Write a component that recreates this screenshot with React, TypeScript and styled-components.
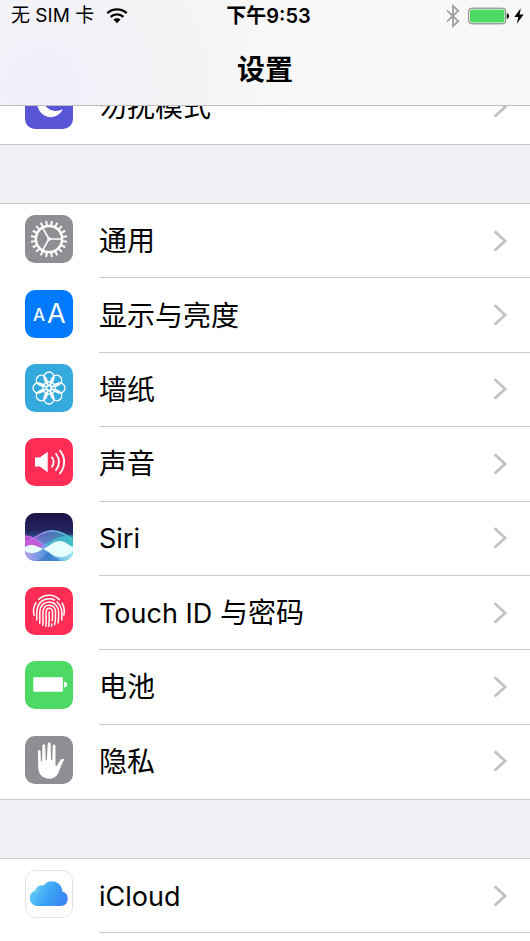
import React from "react";
import styled, { createGlobalStyle } from "styled-components";

const GlobalStyle = createGlobalStyle`
  * { box-sizing: border-box; }
  body {
    margin: 0;
    background: #efeff4;
    color: #000;
    font-family: Inter, "Noto Sans CJK SC", sans-serif;
  }
`;

const Screen = styled.div`
  display: flex;
  flex-direction: column;
  height: 100vh;
  overflow: hidden;
`;

const Header = styled.header`
  position: relative;
  z-index: 1;
  flex: none;
  background: radial-gradient(circle at 8% 85%, #efeff9 0%, #f3f3f6 24%, #f8f8f8 50%);
  border-bottom: 1px solid #bdbcc1;
`;

const StatusBar = styled.div`
  display: grid;
  grid-template-columns: 1fr auto 1fr;
  align-items: center;
  height: 32px;
  padding: 0 4px 0 11px;
  font-size: 19px;
  line-height: 32px;
`;

const StatusSide = styled.div<{ $end?: boolean }>`
  display: flex;
  align-items: center;
  gap: ${(p) => (p.$end ? 8 : 12)}px;
  justify-content: ${(p) => (p.$end ? "flex-end" : "flex-start")};
`;

const Power = styled.div`
  display: flex;
  align-items: center;
  gap: 4px;
`;

const Time = styled.time`
  font-size: 20px;
  font-weight: 600;
`;

const Title = styled.h1`
  margin: 0;
  padding-top: 3px;
  height: 73px;
  font-size: 28px;
  font-weight: 600;
  line-height: 70px;
  text-align: center;
`;

const Content = styled.main`
  display: flex;
  flex: 1;
  flex-direction: column;
  gap: 58px;
  min-height: 0;
  margin-top: -37px;
`;

const Group = styled.ul<{ $minHeight: number; $grow?: boolean }>`
  display: grid;
  flex: ${(p) => (p.$grow ? "1 0 auto" : "none")};
  grid-auto-rows: ${(p) => (p.$grow ? "74px" : "1fr")};
  min-height: ${(p) => p.$minHeight}px;
  margin: 0;
  padding: 0;
  border: solid #c8c7cc;
  border-width: ${(p) => (p.$grow ? "1px 0 0" : "1px 0")};
  background: #fff;
  list-style: none;
`;

const Row = styled.li<{ $divider: boolean }>`
  display: flex;
  background: linear-gradient(#c8c7cc, #c8c7cc) 99px 100% / ${(p) => (p.$divider ? "100% 1px" : "0 0")} no-repeat;
`;

const RowLink = styled.a`
  display: flex;
  flex: 1;
  align-items: center;
  padding: 0 22px 0 25px;
  color: inherit;
  text-decoration: none;
`;

const AppIcon = styled.svg`
  flex: none;
  width: 48px;
  height: 48px;
  margin: 0 26px 4px 0;
  border-radius: 10px;
`;

const Label = styled.span`
  flex: 1;
  font-size: 28px;
  line-height: 40px;
`;

const Latin = styled.span`
  font-size: 27px;
`;

const Glyph = styled.svg`
  display: block;
  flex: none;
`;

function WifiIcon() {
  return (
    <Glyph width="22" height="16" viewBox="0 0 22 16" fill="none" stroke="#000" strokeWidth="2.3">
      <path d="M1.3 5.2C6.8.2 15.2.2 20.7 5.2M4.6 8.8c3.7-3.2 9.1-3.2 12.8 0" />
      <path d="M7.4 11.5c2-1.8 5.2-1.8 7.2 0L11 15.2z" fill="#000" stroke="none" />
    </Glyph>
  );
}

function BluetoothIcon() {
  return (
    <Glyph width="14" height="24" viewBox="0 0 14 24" fill="none" stroke="#9b9b9b" strokeWidth="1.7">
      <path d="M1 6.5 12.3 17.2 7 22V2l5.3 4.8L1 17.5" />
    </Glyph>
  );
}

function BatteryStatusIcon() {
  return (
    <Glyph width="42" height="18" viewBox="0 0 42 18">
      <rect x=".7" y="1.2" width="37" height="15.6" rx="3" fill="#fff" stroke="#777" />
      <rect x="2" y="2.4" width="34.5" height="13.2" rx="1.8" fill="#4cd964" />
      <path d="M38.8 6.2c3 .6 3 5 0 5.6z" />
    </Glyph>
  );
}

function BoltIcon() {
  return (
    <Glyph width="12" height="16" viewBox="0 0 12 16">
      <path d="M6.8.3.3 9h4l-1.5 6.7L9.7 6.4H5.6z" />
    </Glyph>
  );
}

function Chevron() {
  return (
    <Glyph width="15" height="23" viewBox="0 0 15 23" fill="none" stroke="#c2c2c6" strokeWidth="2.7">
      <path d="m1.6 1.2 10.6 9.7L1.6 20.6" />
    </Glyph>
  );
}

function MoonIcon() {
  return (
    <AppIcon viewBox="0 0 48 48">
      <rect width="48" height="48" fill="#5856d6" />
      <path d="M19 11.5A13.2 13.2 0 1 0 37.8 28A13 13 0 0 1 19 11.5z" fill="#fff" />
    </AppIcon>
  );
}

function GearIcon() {
  const teeth = Array.from({ length: 20 }, (_, i) => i * 18);
  return (
    <AppIcon viewBox="0 0 48 48">
      <rect width="48" height="48" fill="#8e8e93" />
      <g stroke="#fff" fill="none">
        <circle cx="24" cy="24" r="13.1" strokeWidth="2.5" />
        {teeth.map((a) => (
          <path key={a} d="M24 5.8v4.6" strokeWidth="2" transform={`rotate(${a + 9} 24 24)`} />
        ))}
        <path d="M24 24h13M24 24l-6.5-11.3M24 24l-6.5 11.3" strokeWidth="1.6" />
      </g>
      <circle cx="24" cy="24" r="1.8" fill="#fff" />
    </AppIcon>
  );
}

const IconText = styled.text`
  fill: #fff;
  font-family: Inter, sans-serif;
`;

function DisplayIcon() {
  return (
    <AppIcon viewBox="0 0 48 48">
      <rect width="48" height="48" fill="#007aff" />
      <IconText x="8" y="31" fontSize="17" fontWeight="500">A</IconText>
      <IconText x="22" y="33" fontSize="27">A</IconText>
    </AppIcon>
  );
}

function FlowerIcon() {
  const petals = Array.from({ length: 8 }, (_, i) => i * 45);
  return (
    <AppIcon viewBox="0 0 48 48">
      <rect width="48" height="48" fill="#34aadc" />
      <g fill="none" stroke="#fff" strokeWidth="1.3">
        {petals.map((a) => (
          <g key={a} transform={`rotate(${a} 24 24)`}>
            <circle cx="24" cy="13" r="5" />
            <path d="M24 21.6c-2.8-1.8-4.4-4.4-4.8-7.4M24 21.6c2.8-1.8 4.4-4.4 4.8-7.4" />
          </g>
        ))}
        <circle cx="24" cy="24" r="2.3" />
      </g>
    </AppIcon>
  );
}

function SoundIcon() {
  return (
    <AppIcon viewBox="0 0 48 48">
      <rect width="48" height="48" fill="#ff2d55" />
      <path d="M10 19.5h4.8l7.9-5.8v20.6l-7.9-5.8H10z" fill="#fff" />
      <g fill="none" stroke="#fff" strokeWidth="1.9" strokeLinecap="round">
        <path d="M27 19.4c2.2 2.6 2.2 6.6 0 9.2M31 16c4 4.8 4 11.2 0 16M35 12.7c5.5 6.8 5.5 15.8 0 22.6" />
      </g>
    </AppIcon>
  );
}

function SiriIcon() {
  return (
    <AppIcon viewBox="0 0 48 48">
      <defs>
        <linearGradient id="siriSky" x1="0" y1="0" x2="0" y2="1">
          <stop offset="0" stopColor="#1d1247" />
          <stop offset=".36" stopColor="#24245f" />
          <stop offset=".65" stopColor="#356da8" />
          <stop offset="1" stopColor="#4698d0" />
        </linearGradient>
        <linearGradient id="siriWave" x1="0" y1="0" x2="1" y2="0">
          <stop offset="0" stopColor="#df55e3" />
          <stop offset=".4" stopColor="#8296f0" />
          <stop offset="1" stopColor="#39d4cb" />
        </linearGradient>
        <linearGradient id="siriBase" x1="0" y1="0" x2="1" y2="0">
          <stop offset="0" stopColor="#b7a6ee" />
          <stop offset=".5" stopColor="#4190da" />
          <stop offset="1" stopColor="#a9eef2" />
        </linearGradient>
      </defs>
      <rect width="48" height="48" fill="url(#siriSky)" />
      <path d="M0 30c9-3 14-12 26-13 9 0 15 3 22 10v21H0z" fill="url(#siriWave)" opacity=".55" />
      <path d="M0 23c9 0 16 6 22 12H0z" fill="#d957dc" opacity=".75" />
      <path d="M14 35c8-4 17-13 34-13v14z" fill="#46dfda" opacity=".5" />
      <path d="M0 29c11-3 14-10 26-11 9 0 15 3 22 9M0 23c9 0 16 6 22 12" fill="none" stroke="url(#siriWave)" strokeWidth="1.4" />
      <path d="M0 37c10 5 14-3 20-1s16 10 28 1v11H0z" fill="url(#siriBase)" />
      <path d="M11 48c5-1 8-5 12-9 5 5 10 7 14 9z" fill="#3c7ac8" opacity=".65" />
      <path d="M0 34c7-4 11-1 18 2-7 4-11 6-18 2zM18 36c7-3 10-8 17-8 5 0 8 4 13 6v4c-6 5-9 7-14 6-6 0-9-5-16-8z" fill="#e7ffff" />
    </AppIcon>
  );
}

function FingerprintIcon() {
  return (
    <AppIcon viewBox="0 0 48 48">
      <rect width="48" height="48" fill="#ff2d55" />
      <g fill="none" stroke="#fff" strokeWidth="1.5" strokeLinecap="round">
        <path d="M13.7 12.4C19.6 6.6 29 6.8 34.5 12.7" />
        <path d="M9.2 28.4c-1.3-4.6-.6-9.2 1.8-12.8M37.2 16.1c2 3.7 2.6 7.6 1.6 12" />
        <path d="M11.7 33c.5-3.3-.2-6.5.2-9.5.8-7.2 5.8-11.8 12.1-11.8 2 0 3.8.4 5.4 1.3M32 15c5.1 4.2 5.2 9.7 4.8 18" />
        <path d="M14.7 36.2c.6-4-.2-8.3.2-12.4C15.5 18.5 19.2 15 24 15c5.8 0 9.5 4.3 9.7 10.2.1 3.8-.1 7.3-.7 10.9" />
        <path d="M17.8 38.3c.7-4.7-.2-9.4.2-13.9.4-3.8 2.7-6.2 6-6.2 4 0 6.4 2.7 6.6 7 .1 4.2-.1 8.1-1 12.6" />
        <path d="M20.9 39.4c.7-5-.1-10 .2-14.5.2-2.3 1.3-3.6 2.9-3.6 2.1 0 3.4 1.5 3.5 4.1.2 3.3-.1 5.8-.3 8.4M26.8 37l-.3 2.2" />
        <path d="M24.1 25c.2 5 .2 9.8-.3 14.4" />
      </g>
    </AppIcon>
  );
}

function BatteryIcon() {
  return (
    <AppIcon viewBox="0 0 48 48">
      <rect width="48" height="48" fill="#4cd964" />
      <rect x="8.3" y="16.3" width="29.6" height="14.4" rx=".8" fill="#fff" />
      <path d="M39.1 20.5c4 .6 4 5.6 0 6.2z" fill="#fff" />
    </AppIcon>
  );
}

function HandIcon() {
  return (
    <AppIcon viewBox="0 0 48 48">
      <rect width="48" height="48" fill="#8e8e93" />
      <path
        d="M13 15.8c0-2.4 2.4-2.4 2.6 0l.4 9.4h1.1L17.4 10c.1-2.3 2.7-2.3 2.8 0l.5 14h1.1L22.7 8.3c.1-2.3 2.9-2.3 3 0L26 24h1.2l.5-13.8c.2-2.3 2.8-2.1 2.8.1v18.2c0 1.6 1 1.9 1.8.6l2.4-4c1-1.9 2.2-2.5 3.9-2 .8.3.6.9.1 1.7-2.2 3.4-3.2 6.7-4.5 10.1-1.8 5-5.3 7.8-10 7.8-6.2 0-10.6-4.4-10.9-10.4z"
        fill="#fff"
      />
    </AppIcon>
  );
}

function CloudIcon() {
  return (
    <AppIcon viewBox="0 0 48 48">
      <defs>
        <linearGradient id="cloudFill" x1="0" y1=".3" x2="1" y2=".7">
          <stop offset="0" stopColor="#6bd0f8" />
          <stop offset=".5" stopColor="#3aa5f4" />
          <stop offset="1" stopColor="#3d83f5" />
        </linearGradient>
        <linearGradient id="cloudPuff" x1="0" y1="0" x2="1" y2="0">
          <stop offset="0" stopColor="#83dafa" />
          <stop offset="1" stopColor="#3ca7ef" />
        </linearGradient>
      </defs>
      <rect x=".5" y=".5" width="47" height="47" rx="9.5" fill="#fff" stroke="#e3e3e5" />
      <path d="M12.5 36a8 8 0 0 1-2.3-15.6 7 7 0 0 1 8.3-4.8 10.4 10.4 0 0 1 18.8 5.8A7.5 7.5 0 0 1 36.5 36z" fill="url(#cloudFill)" />
      <path d="M10.2 20.4a7 7 0 0 1 8.3-4.8 10 10 0 0 0-1.4 5.1c-2.3.2-3.8 1.4-4.7 3.1-.4-1.4-1.2-2.5-2.2-3.4z" fill="url(#cloudPuff)" opacity=".65" />
    </AppIcon>
  );
}

type Item = { id: string; label: React.ReactNode; Icon: () => React.JSX.Element };

const focusItems: Item[] = [{ id: "dnd", label: "勿扰模式", Icon: MoonIcon }];

const deviceItems: Item[] = [
  { id: "general", label: "通用", Icon: GearIcon },
  { id: "display", label: "显示与亮度", Icon: DisplayIcon },
  { id: "wallpaper", label: "墙纸", Icon: FlowerIcon },
  { id: "sounds", label: "声音", Icon: SoundIcon },
  { id: "siri", label: <Latin>Siri</Latin>, Icon: SiriIcon },
  { id: "touch-id", label: <><Latin>Touch ID</Latin> 与密码</>, Icon: FingerprintIcon },
  { id: "battery", label: "电池", Icon: BatteryIcon },
  { id: "privacy", label: "隐私", Icon: HandIcon },
];

const accountItems: Item[] = [{ id: "icloud", label: <Latin>iCloud</Latin>, Icon: CloudIcon }];

function SettingsGroup({ items, minHeight, grow }: { items: Item[]; minHeight: number; grow?: boolean }) {
  return (
    <Group $minHeight={minHeight} $grow={grow}>
      {items.map(({ id, label, Icon }, i) => (
        <Row key={id} $divider={grow || i < items.length - 1}>
          <RowLink href={`#${id}`}>
            <Icon />
            <Label>{label}</Label>
            <Chevron />
          </RowLink>
        </Row>
      ))}
    </Group>
  );
}

export default function App() {
  return (
    <Screen lang="zh-CN">
      <GlobalStyle />
      <Header>
        <StatusBar>
          <StatusSide>
            <span>无 SIM 卡</span>
            <WifiIcon />
          </StatusSide>
          <Time>下午9:53</Time>
          <StatusSide $end>
            <BluetoothIcon />
            <Power>
              <BatteryStatusIcon />
              <BoltIcon />
            </Power>
          </StatusSide>
        </StatusBar>
        <Title>设置</Title>
      </Header>
      <Content>
        <SettingsGroup items={focusItems} minHeight={76} />
        <SettingsGroup items={deviceItems} minHeight={597} />
        <SettingsGroup items={accountItems} minHeight={76} grow />
      </Content>
    </Screen>
  );
}
